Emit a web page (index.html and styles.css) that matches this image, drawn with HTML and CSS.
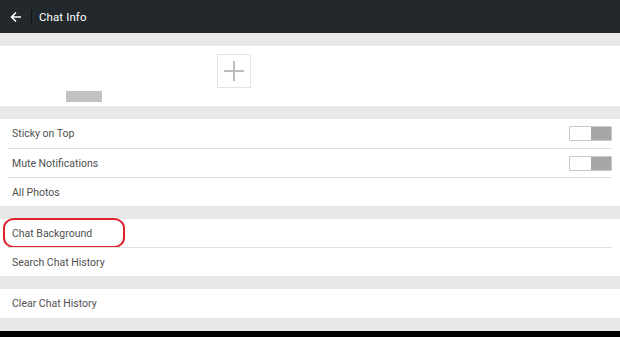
FILE: index.html
```html
<!DOCTYPE html>
<html lang="en">
<head>
    <meta charset="UTF-8">
    <meta name="viewport" content="width=device-width, initial-scale=1.0">
    <title>Chat Info</title>
    <link rel="stylesheet" href="styles.css">
</head>
<body>
    <header class="topbar">
        <span class="back">
            <svg width="12" height="12" viewBox="0 0 12 12">
                <path d="M11 6H1.5M6 1.5L1.5 6L6 10.5" fill="none" stroke="#fff" stroke-width="1.6"/>
            </svg>
        </span>
        <span class="sep"></span>
        <h1>Chat Info</h1>
    </header>
    <main>
        <div class="gap"></div>
        <!-- Miembros -->
        <section class="members">
            <div class="member">
                <div class="avatar"></div>
                <div class="name"></div>
            </div>
            <div class="add">
                <span class="plus-h"></span>
                <span class="plus-v"></span>
            </div>
        </section>
        <div class="gap"></div>
        <section class="group">
            <div class="row">
                <span>Sticky on Top</span>
                <span class="toggle"><i></i><b></b></span>
            </div>
            <div class="row">
                <span>Mute Notifications</span>
                <span class="toggle"><i></i><b></b></span>
            </div>
            <div class="row">
                <span>All Photos</span>
            </div>
        </section>
        <div class="gap"></div>
        <section class="group">
            <div class="row marked">
                <span>Chat Background</span>
                <span class="ring"></span>
            </div>
            <div class="row">
                <span>Search Chat History</span>
            </div>
        </section>
        <div class="gap"></div>
        <section class="group">
            <div class="row">
                <span>Clear Chat History</span>
            </div>
        </section>
        <div class="gap"></div>
    </main>
    <div class="bottom"></div>
</body>
</html>
```

FILE: styles.css
```css
body {
    font-family: Roboto, "Liberation Sans", sans-serif;
    background-color: #e8e8e8;
    margin: 0;
    padding: 0;
    width: 620px;
    height: 337px;
    overflow: hidden;
}

.topbar {
    height: 33px;
    background-color: #22282c;
    color: white;
    display: flex;
    align-items: center;
}

.back {
    width: 30px;
    display: flex;
    justify-content: center;
    padding-left: 1px;
}

.sep {
    width: 1px;
    height: 14px;
    background-color: #121618;
    margin-right: 7px;
}

h1 {
    margin: 0;
    font-size: 11.5px;
    font-weight: normal;
    letter-spacing: 0.1px;
}

.gap {
    height: 13px;
    background-color: #e8e8e8;
}

.members {
    height: 60px;
    background: white;
    display: flex;
    align-items: flex-start;
}

.member {
    width: 36px;
    margin-left: 66px;
    display: flex;
    flex-direction: column;
}

.avatar {
    height: 45px;
}

.name {
    height: 11px;
    background-color: #c2c2c2;
}

.add {
    width: 32px;
    height: 32px;
    margin-left: 115px;
    margin-top: 8px;
    border: 1px solid #e2e2e2;
    position: relative;
}

.plus-h, .plus-v {
    position: absolute;
    background-color: #bdbdbd;
}

.plus-h {
    left: 6px;
    top: 15px;
    width: 20px;
    height: 2px;
}

.plus-v {
    left: 15px;
    top: 6px;
    width: 2px;
    height: 20px;
}

.group {
    background: white;
    padding: 0 8px;
}

.row {
    height: 28px;
    padding-left: 4px;
    display: flex;
    align-items: center;
    justify-content: space-between;
    font-size: 10.5px;
    color: #505050;
    border-top: 1px solid #e0e0e0;
    position: relative;
}

.row:first-child {
    border-top: none;
}

.group:nth-of-type(2) .row:first-child,
.group:nth-of-type(4) .row:first-child {
    height: 29px;
}

.toggle {
    display: flex;
    width: 41px;
    height: 13px;
    border: 1px solid #c8c8c8;
    border-radius: 1px;
}

.toggle i {
    flex: 1;
    background: white;
}

.toggle b {
    flex: 1;
    background-color: #a6a6a6;
}

.ring {
    position: absolute;
    left: -5px;
    top: -1px;
    width: 118px;
    height: 26px;
    border: 2px solid #e3202b;
    border-radius: 11px / 10px;
}

.bottom {
    height: 7px;
    background: black;
}
```
